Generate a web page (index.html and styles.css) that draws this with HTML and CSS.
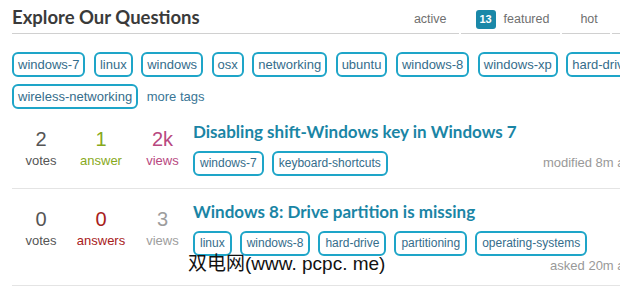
FILE: index.html
```html
<!DOCTYPE html>
<html lang="en">
<head>
    <meta charset="UTF-8">
    <meta name="viewport" content="width=device-width, initial-scale=1.0">
    <title>Explore Our Questions</title>
    <link rel="stylesheet" href="styles.css">
</head>
<body>
    <div class="page">
        <div class="header">
            <h1 class="title">Explore Our Questions</h1>
            <a class="tab tab-first" href="#">active</a>
            <a class="tab tab-featured" href="#"><span class="badge">13</span>featured</a>
            <a class="tab tab-hot" href="#">hot</a>
            <a class="tab" href="#">week</a>
        </div>

        <div class="tag-cloud">
            <a class="tag" href="#">windows-7</a>
            <a class="tag" href="#">linux</a>
            <a class="tag" href="#">windows</a>
            <a class="tag" href="#">osx</a>
            <a class="tag" href="#">networking</a>
            <a class="tag" href="#">ubuntu</a>
            <a class="tag" href="#">windows-8</a>
            <a class="tag" href="#">windows-xp</a>
            <a class="tag" href="#">hard-drive</a>
            <a class="tag" href="#">wireless-networking</a>
            <a class="more-tags" href="#">more tags</a>
        </div>

        <div class="questions">
            <div class="question">
                <div class="stats">
                    <div class="stat votes"><div class="num">2</div><div class="label">votes</div></div>
                    <div class="stat answered"><div class="num">1</div><div class="label">answer</div></div>
                    <div class="stat hot-views"><div class="num">2k</div><div class="label">views</div></div>
                </div>
                <div class="summary">
                    <h3 class="q-title"><a href="#">Disabling shift-Windows key in Windows 7</a></h3>
                    <div class="q-foot">
                        <div class="q-tags">
                            <a class="tag" href="#">windows-7</a>
                            <a class="tag" href="#">keyboard-shortcuts</a>
                        </div>
                        <div class="meta">modified 8m ago</div>
                    </div>
                </div>
            </div>

            <div class="question">
                <div class="stats">
                    <div class="stat votes"><div class="num">0</div><div class="label">votes</div></div>
                    <div class="stat unanswered"><div class="num">0</div><div class="label">answers</div></div>
                    <div class="stat views"><div class="num">3</div><div class="label">views</div></div>
                </div>
                <div class="summary">
                    <h3 class="q-title"><a href="#">Windows 8: Drive partition is missing</a></h3>
                    <div class="q-foot">
                        <div class="q-tags">
                            <a class="tag" href="#">linux</a>
                            <a class="tag" href="#">windows-8</a>
                            <a class="tag" href="#">hard-drive</a>
                            <a class="tag" href="#">partitioning</a>
                            <a class="tag" href="#">operating-systems</a>
                        </div>
                        <div class="meta">asked 20m ago</div>
                    </div>
                </div>
            </div>
        </div>

        <div class="watermark">双电网(www. pcpc. me)</div>
    </div>
</body>
</html>
```

FILE: styles.css
```css
body {
    margin: 0;
    background-color: #fff;
    font-family: "Liberation Sans", Arial, sans-serif;
    font-size: 13px;
    overflow: hidden;
}
a {
    text-decoration: none;
}
.page {
    position: relative;
    width: 669px;
    padding-left: 12px;
    box-sizing: border-box;
}
.header {
    display: flex;
    align-items: flex-end;
    padding-top: 4px;
}
.title {
    flex: 1;
    margin: 0;
    font-family: Lato, "Open Sans", sans-serif;
    font-size: 18.5px;
    font-weight: bold;
    line-height: 26px;
    color: #3a3a3a;
    padding-bottom: 3px;
    border-bottom: 1px solid #d0d0d0;
}
.tab {
    display: flex;
    align-items: center;
    height: 30px;
    padding: 1px 12px 0 16px;
    box-sizing: border-box;
    margin-left: 2px;
    font-size: 12.5px;
    color: #707070;
    border-bottom: 1px solid #d0d0d0;
}
.tab-first {
    margin-left: 0;
}
.tab-featured {
    padding-left: 15px;
    padding-right: 11px;
}
.tab-hot {
    padding-left: 18px;
}
.badge {
    display: inline-block;
    width: 20px;
    height: 19px;
    line-height: 19px;
    margin-right: 8px;
    border-radius: 3px;
    background-color: #1a88a8;
    color: #fff;
    font-size: 11px;
    font-weight: bold;
    text-align: center;
}
.tag-cloud {
    display: flex;
    flex-wrap: wrap;
    align-items: center;
    gap: 7px 8.5px;
    margin-top: 18px;
}
.tag {
    display: inline-block;
    height: 21px;
    line-height: 21px;
    padding: 0 4px;
    border: 2px solid #1ea5c8;
    border-radius: 6px;
    color: #356d8b;
}
.more-tags {
    color: #3a7696;
}
.question {
    display: flex;
    padding: 12px 0 12px;
    border-bottom: 1px solid #e4e4e4;
}
.stats {
    display: grid;
    grid-template-columns: 58px 62px 61px;
    padding-top: 5px;
    text-align: center;
}
.num {
    font-size: 20px;
    line-height: 26px;
}
.label {
    line-height: 18px;
}
.votes {
    color: #555;
}
.answered {
    color: #88a91c;
}
.unanswered {
    color: #a8201a;
}
.hot-views {
    color: #b8487f;
}
.views {
    color: #9d9d9d;
}
.summary {
    flex: 1;
    padding-right: 30px;
}
.q-title {
    margin: 0 0 8px;
    font-family: Lato, "Open Sans", sans-serif;
    font-size: 17px;
    line-height: 22px;
}
.q-title a {
    color: #1a85a5;
}
.q-foot {
    display: flex;
    flex-wrap: wrap;
    align-items: baseline;
    row-gap: 3px;
}
.q-tags {
    display: flex;
    gap: 8px;
}
.q-tags .tag {
    padding: 0 5px;
    font-size: 12px;
}
.meta {
    margin-left: auto;
    line-height: 14px;
    color: #999;
}
.watermark {
    position: absolute;
    left: 188px;
    top: 254px;
    font-family: "Liberation Sans", "Noto Sans CJK SC", sans-serif;
    font-size: 19px;
    line-height: 20px;
    color: #111;
}
```
